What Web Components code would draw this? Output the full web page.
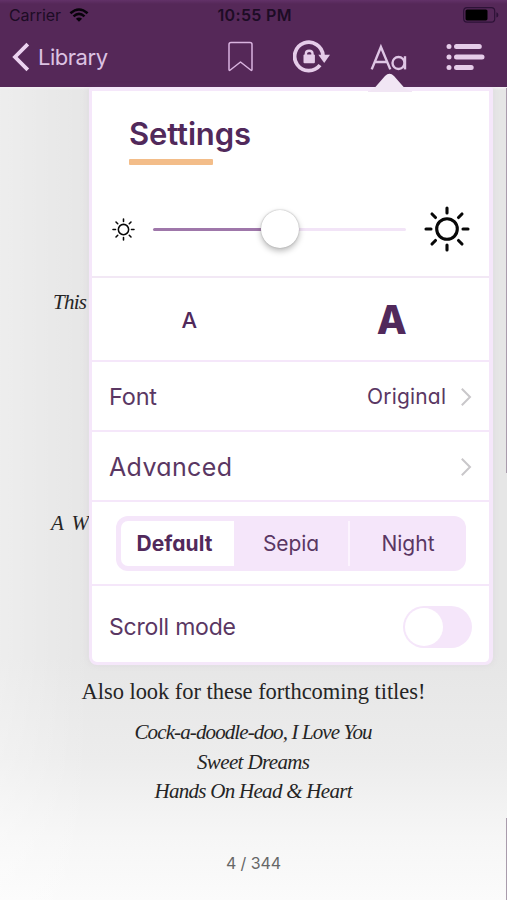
<!DOCTYPE html>
<html lang="en">
<head>
<meta charset="utf-8">
<title>Reader settings</title>
<style>
html,body{margin:0;height:900px;overflow:hidden}
</style>
</head>
<body>
<reader-app></reader-app>
<script>
const define = (name, html, setup) => {
  const t = document.createElement('template');
  t.innerHTML = html;
  customElements.define(name, class extends HTMLElement {
    connectedCallback() {
      if (this.shadowRoot) return;
      this.attachShadow({ mode: 'open' }).appendChild(t.content.cloneNode(true));
      if (setup) setup(this, this.shadowRoot);
    }
  });
};

// Text tracked to an optional width given in the "w" attribute.
define('track-text', `<style>:host{display:inline-block;white-space:pre}span{display:inline-block}</style><span><slot></slot></span>`, (el, root) => {
  const w = +el.getAttribute('w');
  if (!w) return;
  const s = root.querySelector('span');
  const n = el.textContent.length;
  const gap = (w - s.getBoundingClientRect().width) / Math.max(1, n - 1);
  s.style.letterSpacing = gap + 'px';
  s.style.marginRight = -gap + 'px';
});

define('status-bar', `<style>
:host{display:grid;grid-template-columns:1fr auto 1fr;align-items:center;height:30px;padding:0 8px 0 9px;color:#1d0c25;font:400 16px/30px Inter,"Liberation Sans",sans-serif}
.l{display:flex;align-items:center;gap:8px}
.r{display:flex;justify-content:flex-end}
.t{font-weight:600;margin-left:1px}
svg{display:block}
</style>
<div class="l"><track-text w="52">Carrier</track-text>
<svg width="20" height="14" viewBox="0 0 20 14" fill="none" stroke="#08030b" stroke-width="2.5"><path d="M1.4 5.3Q10-2.4 18.6 5.3M4.5 8.4Q10 3.4 15.5 8.4"/><path d="M6.9 10.8Q10 8 13.1 10.8L10 13.8Z" fill="#08030b" stroke="none"/></svg></div>
<div class="t"><track-text w="74">10:55 PM</track-text></div>
<div class="r"><svg width="36" height="16" viewBox="0 0 36 16"><rect x=".7" y=".7" width="31" height="14.4" rx="3.4" fill="none" stroke="#2d1237" stroke-width="1.2"/><rect x="2.5" y="2.4" width="22" height="11" rx="1.6" fill="#000"/><path d="M33.4 5.3q2 .6 2 2.6t-2 2.6z" fill="#2d1237"/></svg></div>`);

define('nav-bar', `<style>
:host{display:flex;align-items:center;height:57px;box-sizing:border-box;padding:0 22px 3px 11px;color:#dcc2e2}
.b{display:flex;align-items:center;gap:8px;font:400 22px/30px Inter,"Liberation Sans",sans-serif;flex:1}
svg{display:block}
</style>
<div class="b"><svg width="19" height="30" viewBox="0 0 19 30" fill="none" stroke="#ecd3f0" stroke-width="3.8"><path d="M16.8 2.2 4 15 16.8 27.8"/></svg><track-text w="70">Library</track-text></div>
<svg width="28" height="32" viewBox="0 0 28 32" fill="none" stroke="#d9b3df" stroke-width="1.5" stroke-linejoin="round"><path d="M4 1.5H23Q25 1.5 25 3.5V28.6Q25 30 23.7 29L13.5 21 3.3 29Q2 30 2 28.6V3.5Q2 1.5 4 1.5Z"/></svg>
<svg style="margin-left:38px" width="37" height="34" viewBox="0 0 37 34"><path d="M27 25.2A14.2 14.2 0 1 1 30 15.5" fill="none" stroke="#e5cce9" stroke-width="3.8"/><path d="M25.3 14.8H37L31.2 23Z" fill="#e5cce9"/><rect x="10.5" y="14.5" width="11.4" height="8.8" rx="1" fill="#e5cce9"/><path d="M12.9 15.5V13.6Q12.9 10.8 16.2 10.8T19.5 13.6V15.5" fill="none" stroke="#e5cce9" stroke-width="2.4"/></svg>
<svg style="margin-left:40px" width="38" height="34" viewBox="0 0 38 34" fill="none" stroke="#dfc6e5" stroke-width="2.4"><path d="M1.7 29.4 10.9 7 20.3 29.4M5 22H17"/><circle cx="28.5" cy="23" r="6"/><path d="M35 16.2V29.4"/></svg>
<svg style="margin-left:38px" width="39" height="34" viewBox="0 0 39 34" stroke="#e5cce9" stroke-width="5" stroke-linecap="round"><path d="M3 6.5h.01M3 17h.01M3 27.5h.01M10.5 6.5H33.3M10.5 17H36M10.5 27.5H25.2"/></svg>`);

define('bright-slider', `<style>
:host{display:flex;align-items:center;gap:18px;height:46px}
.track{position:relative;width:253px;height:3px;border-radius:2px;background:linear-gradient(90deg,#9f77aa 50%,#f2e4f7 50%)}
.knob{position:absolute;left:108px;top:-18px;width:38px;height:38px;border-radius:50%;background:#fff;box-shadow:0 0 1.5px #9a9a9a,0 3px 6px rgba(0,0,0,.28)}
</style>
<sun-icon size="23"></sun-icon><div class="track"><div class="knob"></div></div><sun-icon size="46"></sun-icon>`);

define('sun-icon', `<style>:host{display:block}svg{display:block}</style>
<svg viewBox="-23 -23 46 46" fill="none" stroke="#080808" stroke-width="3.1" stroke-linecap="round"><circle r="10.3"/><path d="M0-16V-21M0 16V21M16 0H21M-16 0H-21M11.5-11.5 15-15M11.5 11.5 15 15M-11.5 11.5-15 15M-11.5-11.5-15-15"/></svg>`, (el, root) => {
  const s = root.querySelector('svg'), n = el.getAttribute('size');
  s.setAttribute('width', n); s.setAttribute('height', n);
});

define('menu-row', `<style>
:host{display:flex;align-items:center;box-sizing:border-box;padding:1px 17px 0;border-top:2px solid #f5e7fa}
.v{margin-left:auto;display:flex;align-items:center}
</style><slot></slot><div class="v"><slot name="end"></slot></div>`);

define('chevron-icon', `<style>:host{display:block}svg{display:block}</style>
<svg width="12" height="20" viewBox="0 0 12 20" fill="none" stroke="#c9c7ca" stroke-width="2"><path d="M1.8 1.8 10 10 1.8 18.2"/></svg>`);

define('theme-picker', `<style>
:host{display:grid;grid-template-columns:113px 116px 1fr;width:350px;height:55px;box-sizing:border-box;padding:5px 0 5px 5px;border-radius:12px;background:#f5e6fa;font-size:21px}
div{display:flex;align-items:center;justify-content:center;padding-top:1px}
.on{background:#fff;border-radius:7px 0 0 7px;font-weight:700;color:#51295b;padding-right:6px}
.mid{border-right:2px solid #fcf4fe}
</style><div class="on"><track-text w="76">Default</track-text></div><div class="mid"><track-text w="56">Sepia</track-text></div><div><track-text w="53">Night</track-text></div>`);

define('toggle-switch', `<style>
:host{display:block;width:69px;height:42px;box-sizing:border-box;padding:2px;border-radius:21px;background:#f5e6fa}
div{width:38px;height:38px;border-radius:50%;background:#fff}
</style><div></div>`);

define('settings-panel', `<style>
:host{display:block;box-sizing:border-box;width:404px;height:578px;border:solid #f5e7fa;border-width:4px 4px 3px 3px;border-radius:3px 3px 8px 8px;background:#fff;color:#5a3763;font-family:Inter,"Open Sans",sans-serif;font-feature-settings:"cv11","ss03";box-shadow:0 0 6px rgba(150,120,160,.1)}
.notch{position:absolute;left:276px;top:-18px}
.top{height:185px;display:flex;flex-direction:column;align-items:flex-start;box-sizing:border-box;padding:25px 0 0 37px}
h1{font-size:31px;line-height:36px;font-weight:600;color:#51295b;margin:0;height:43px}
.bar{width:84px;height:6px;border-radius:1px;background:#f3bd89}
bright-slider{margin:41px 0 0 -17px}
.sizes{display:grid;grid-template-columns:1fr 1fr;align-items:center;justify-items:center;height:84px;box-sizing:border-box;padding-top:1px;border-top:2px solid #f2e8f5;color:#51295b}
.sizes span{line-height:50px}
.sm{font-size:22px;font-weight:500;padding-right:4px}
.lg{font:800 39px/50px Inter,"Open Sans",sans-serif;padding-left:4px}
.row{height:70px}
chevron-icon{margin-left:14px}
svg{display:block}
</style>
<svg class="notch" width="44" height="19" viewBox="0 0 44 19"><path d="M0 19V18Q5 17.5 10 11L17 3Q21.5-1.5 26 3L33 11Q38 17.5 44 18V19Z" fill="#f1e6f4"/></svg>
<div class="top"><h1><track-text w="122">Settings</track-text></h1><div class="bar"></div><bright-slider></bright-slider></div>
<div class="sizes"><span class="sm">A</span><span class="lg">A</span></div>
<menu-row class="row"><track-text w="48" style="font-size:23.5px">Font</track-text><track-text slot="end" w="79" style="font-size:21px">Original</track-text><chevron-icon slot="end"></chevron-icon></menu-row>
<menu-row class="row"><track-text w="123" style="font-size:25px">Advanced</track-text><chevron-icon slot="end"></chevron-icon></menu-row>
<menu-row style="height:84px;padding:0 0 0 24px"><theme-picker></theme-picker></menu-row>
<menu-row style="height:78px;padding-top:5px"><track-text w="127" style="font-size:23px">Scroll mode</track-text><toggle-switch slot="end"></toggle-switch></menu-row>`);

define('book-page', `<style>
:host{display:block;box-sizing:border-box;height:813px;padding-top:200px;color:#252525;font:22.5px/30px "Liberation Serif",serif;text-align:center;
background:linear-gradient(180deg,#f4f0f5,rgba(244,240,245,0) 3px),linear-gradient(90deg,rgba(255,255,255,.3),rgba(255,255,255,0) 90px),linear-gradient(180deg,#e6e6e6,#e6e6e6 570px,#ececec 670px,#f6f6f6 750px,#fbfbfb)}
p{margin:0;height:30px}
.m{text-align:left;font-style:italic;font-size:21px}
i{display:block;height:29.7px;font-size:21px}
.n{margin-top:42px;color:#666;font:400 16px/30px Inter,sans-serif}
.edge{position:absolute;right:0;width:1px;background:#a99cac}
</style>
<p class="m" style="padding-left:53px"><track-text w="34">This</track-text></p>
<p class="m" style="padding-left:51px;margin-top:191px"><track-text w="38">A W</track-text></p>
<p style="margin-top:139px"><track-text w="344">Also look for these forthcoming titles!</track-text></p>
<div style="margin-top:10px"><i><track-text w="238">Cock-a-doodle-doo, I Love You</track-text></i><i><track-text w="113">Sweet Dreams</track-text></i><i><track-text w="198">Hands On Head &amp; Heart</track-text></i></div>
<p class="n"><track-text w="55">4 / 344</track-text></p>
<div class="edge" style="top:88px;height:385px"></div><div class="edge" style="top:818px;height:82px"></div>`);

define('reader-app', `<style>
:host{display:block;position:relative;width:507px;height:900px;overflow:hidden}
header{background:linear-gradient(#623268,#552858 4px);height:87px}
settings-panel{position:absolute;left:89px;top:87px}
</style><header><status-bar></status-bar><nav-bar></nav-bar></header><book-page></book-page><settings-panel></settings-panel>`);
</script>
</body>
</html>
